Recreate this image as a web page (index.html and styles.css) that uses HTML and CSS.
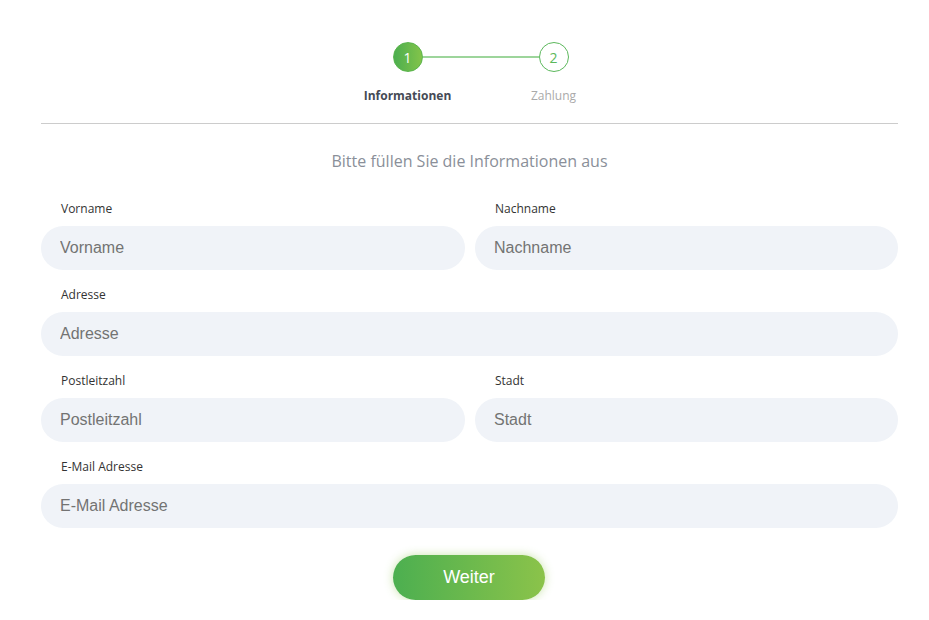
FILE: index.html
```html
<!DOCTYPE html>
<html lang="de">
<head>
<meta charset="utf-8">
<link rel="stylesheet" href="styles.css">
</head>
<body>
<div class="wrap">
  <div class="stepper">
    <div class="step active">
      <div class="circle">1</div>
      <div class="step-label">Informationen</div>
    </div>
    <div class="connector"></div>
    <div class="step">
      <div class="circle">2</div>
      <div class="step-label">Zahlung</div>
    </div>
  </div>
  <hr class="divider">
  <h2 class="title">Bitte füllen Sie die Informationen aus</h2>
  <form class="form">
    <div class="field">
      <label class="label">Vorname</label>
      <input class="input" placeholder="Vorname">
    </div>
    <div class="field">
      <label class="label">Nachname</label>
      <input class="input" placeholder="Nachname">
    </div>
    <div class="field full">
      <label class="label">Adresse</label>
      <input class="input" placeholder="Adresse">
    </div>
    <div class="field">
      <label class="label">Postleitzahl</label>
      <input class="input" placeholder="Postleitzahl">
    </div>
    <div class="field">
      <label class="label">Stadt</label>
      <input class="input" placeholder="Stadt">
    </div>
    <div class="field full">
      <label class="label">E-Mail Adresse</label>
      <input class="input" placeholder="E-Mail Adresse">
    </div>
    <div class="actions full">
      <button type="button" class="btn">Weiter</button>
    </div>
  </form>
</div>
</body>
</html>
```
FILE: styles.css
```css
* { box-sizing: border-box; }
html, body { margin: 0; padding: 0; background: #fff; }
body { font-family: "Open Sans", sans-serif; }
.wrap {
  width: 857px;
  margin: 0 0 0 41px;
  padding-top: 42px;
}
.stepper {
  display: flex;
  justify-content: center;
  align-items: flex-start;
  padding-left: 22px;
}
.step {
  width: 100px;
  display: flex;
  flex-direction: column;
  align-items: center;
  position: relative;
  z-index: 1;
}
.circle {
  width: 30px;
  height: 30px;
  border-radius: 50%;
  border: 1px solid #5cb85c;
  color: #5cb85c;
  background: #fff;
  display: flex;
  align-items: center;
  justify-content: center;
  font-size: 14px;
}
.step.active .circle {
  background: linear-gradient(90deg, #4cae4f, #83c44a);
  border-color: #5ab54d;
  color: #fff;
}
.step-label {
  margin-top: 16px;
  font-size: 12px;
  color: #aaa;
  line-height: 16px;
}
.step.active .step-label {
  color: #454a55;
  font-weight: 700;
}
.connector {
  flex: none;
  width: 116px;
  height: 2px;
  background: #9dd59b;
  margin: 14px -35px 0;
  position: relative;
  z-index: 0;
}
.divider {
  border: 0;
  border-top: 1px solid #cccccc;
  margin: 19px 0 0;
  height: 0;
}
.title {
  text-align: center;
  font-weight: 400;
  font-size: 16px;
  color: #8a8f99;
  margin: 26px 0 0;
  line-height: 22px;
}
.form {
  display: grid;
  grid-template-columns: 424px 423px;
  column-gap: 10px;
  row-gap: 17px;
  margin-top: 29px;
}
.field { display: flex; flex-direction: column; }
.full { grid-column: 1 / -1; }
.label {
  font-size: 12px;
  color: #333;
  line-height: 16px;
  padding-left: 20px;
  margin-bottom: 9px;
}
.input {
  height: 44px;
  border: 0;
  border-radius: 22px;
  background: #f0f3f8;
  padding: 0 19px;
  font-family: "Liberation Sans", Arial, sans-serif;
  font-size: 16px;
  color: #555;
  outline: none;
}
.input::placeholder { color: #737373; }
.actions {
  display: flex;
  justify-content: center;
  padding-top: 10px;
  padding-right: 1px;
}
.btn {
  width: 152px;
  height: 45px;
  border: 0;
  border-radius: 23px;
  background: linear-gradient(90deg, #4caf50, #8bc34a);
  color: #fff;
  font-family: "Liberation Sans", Arial, sans-serif;
  font-size: 18px;
  box-shadow: 0 0 10px rgba(139, 195, 74, 0.45);
  cursor: pointer;
}
```
